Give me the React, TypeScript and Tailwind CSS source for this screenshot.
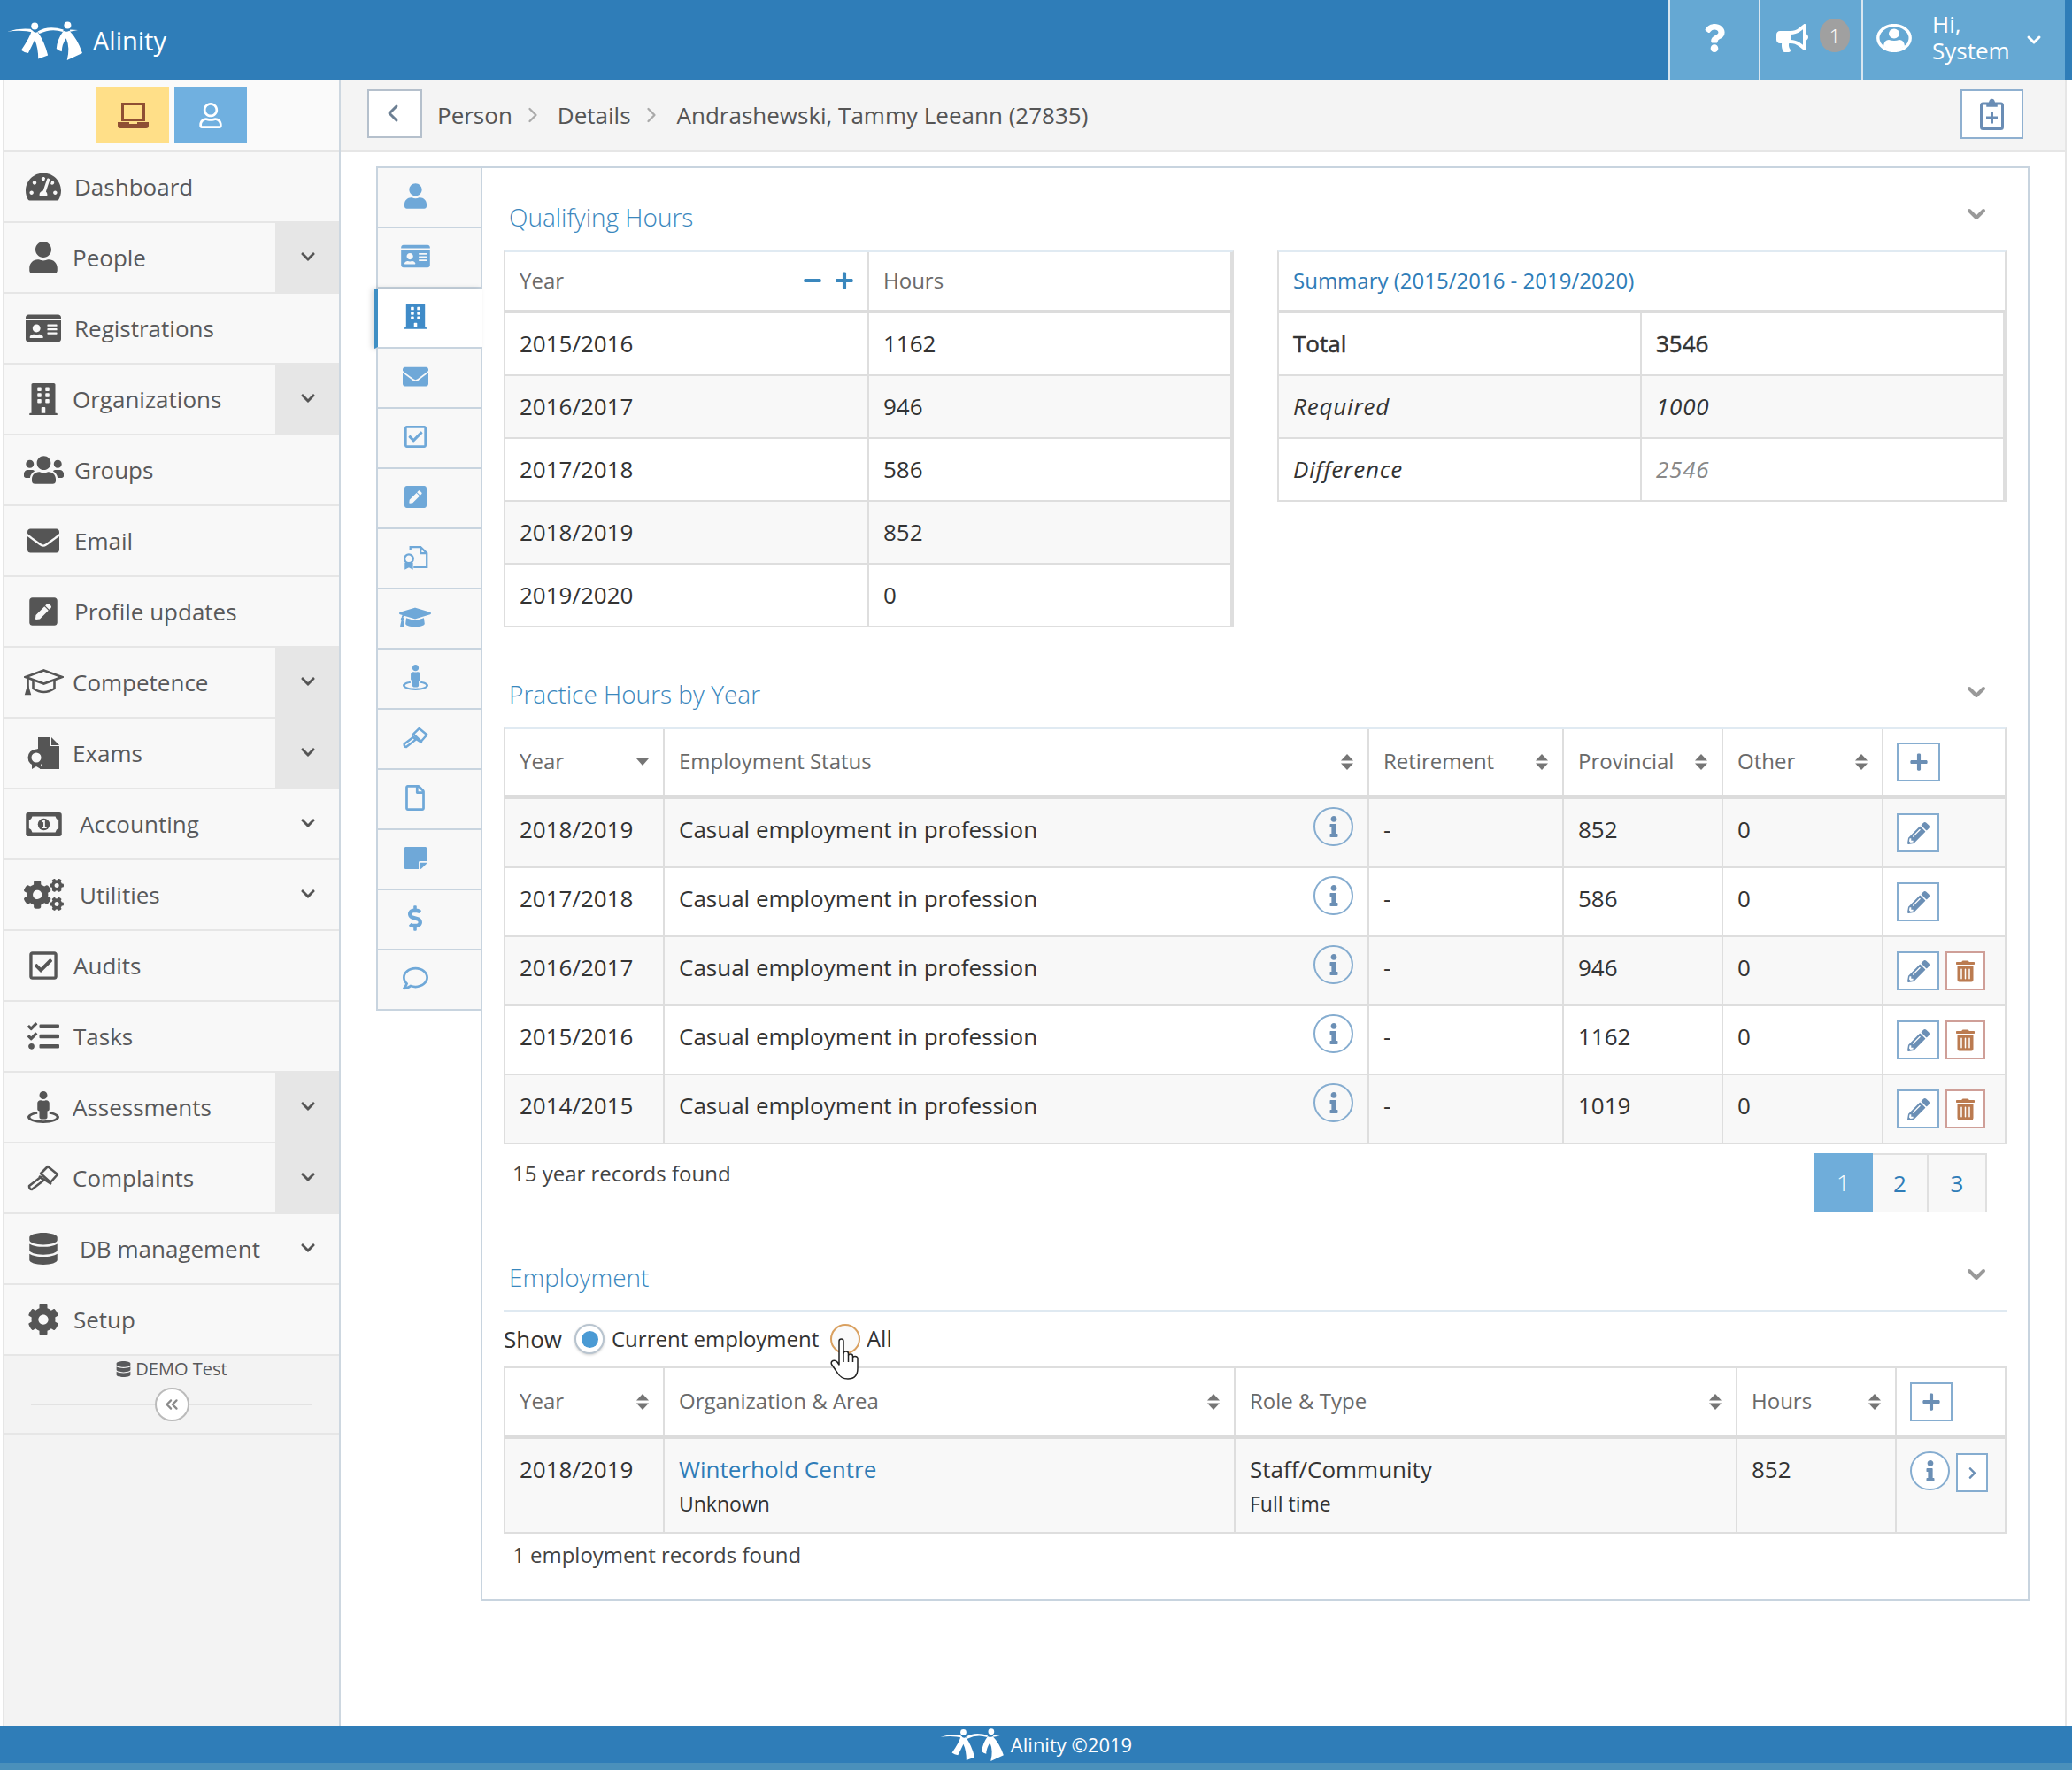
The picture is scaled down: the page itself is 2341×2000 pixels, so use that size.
import React from 'react';
import {
  FaBuilding, FaBullhorn, FaChevronDown, FaChevronRight, FaCog, FaCogs, FaDatabase, FaDollarSign, FaEnvelope,
  FaGraduationCap, FaIdCard, FaInfo, FaMinus, FaPenSquare, FaPencilAlt, FaPlus, FaQuestion,
  FaRegCheckSquare, FaRegComment, FaRegFile, FaRegUser, FaStickyNote, FaStreetView, FaTachometerAlt, FaTasks,
  FaTrashAlt, FaUser, FaUsers,
} from 'react-icons/fa';
import { ChevronDown, ChevronLeft, ChevronRight, ChevronsLeft } from 'lucide-react';

const Logo = ({ className }: { className: string }) => (
  <svg viewBox="0 0 256 132" className={className} fill="#fff">
    <circle cx="94" cy="16" r="12" />
    <circle cx="206" cy="13" r="12" />
    <path d="M1 35Q40 22 80 26L92 38Q50 28 1 35Z" />
    <path d="M104 34Q140 12 192 28L190 36Q150 22 110 42Z" />
    <path d="M214 28L241 30L214 35Z" />
    <path d="M84 30Q78 55 48 98Q58 106 72 108Q84 85 94 63Q106 90 106 128L139 116Q128 70 104 36Q94 42 84 30Z" />
    <path d="M192 32Q170 62 168 93Q175 100 186 103Q186 80 201 58Q215 90 204 132L256 108Q240 60 212 32Q202 38 192 32Z" />
  </svg>
);

const ExamFilled = () => (
  <svg viewBox="0 0 36 36" className="w-[36px] h-[36px]" fill="currentColor">
    <path d="M12 0H25V10H36V36H14L18 26Q18 16 10 13H12Z" />
    <path d="M27 0L36 9H27Z" />
    <circle cx="10" cy="23" r="7.5" fill="none" stroke="currentColor" strokeWidth="4" />
    <path d="M5 30V36L10 33L15 36V30Z" />
  </svg>
);

const ExamOutline = () => (
  <svg viewBox="0 0 34 30" className="w-[30px] h-[29px]" fill="none" stroke="currentColor" strokeWidth="2.6">
    <path d="M11 6V2H24L32 10V28H15" />
    <path d="M24 2V10H32" />
    <circle cx="9" cy="17" r="5.5" />
    <path d="M5 22V29L9 27L13 29V22" fill="currentColor" />
  </svg>
);

const GavelIcon = ({ className, width }: { className: string; width: number }) => (
  <svg viewBox="0 0 36 30" className={className} fill="none" stroke="currentColor" strokeWidth={width} strokeLinejoin="round">
    <path d="M2 24L15 14L18 18L5 28Q2 28 2 24Z" />
    <path d="M15 10L23 2L34 11L26 20Z" />
    <path d="M13 13L27 22" />
  </svg>
);

const CapOutline = () => (
  <svg viewBox="0 0 44 30" className="w-[45px] h-[30px]" fill="none" stroke="currentColor" strokeWidth="2.6">
    <path d="M22 1.5L42.5 9L22 16.5L1.5 9Z" />
    <path d="M10 13V22Q22 30 34 22V13" />
    <path d="M4 10V22" />
    <path d="M2 28L4 21L6 28Z" fill="currentColor" />
  </svg>
);

const MoneyIcon = () => (
  <svg viewBox="0 0 45 30" className="w-[45px] h-[27px]">
    <rect width="45" height="30" rx="3" fill="currentColor" />
    <path d="M8 5H37Q38 9 41 10V20Q38 21 37 25H8Q7 21 4 20V10Q7 9 8 5Z" fill="#f8f8f8" />
    <circle cx="22.5" cy="15" r="7.5" fill="currentColor" />
    <path d="M20 12L23 10.5V18.5M20 19H26" stroke="#f8f8f8" strokeWidth="2" fill="none" />
  </svg>
);

const LaptopIcon = () => (
  <svg viewBox="0 0 35 29" className="w-[35px] h-[29px]" fill="#8f4f33">
    <path fillRule="evenodd" d="M4 0H31V21H4ZM7 3V18H28V3Z" />
    <path d="M0 22H13V24H22V22H35V26Q35 29 32 29H3Q0 29 0 26Z" />
  </svg>
);

const ClipboardIcon = () => (
  <svg viewBox="0 0 27 36" className="w-[27px] h-[36px]" fill="none" stroke="#6a8db5" strokeWidth="3">
    <rect x="1.5" y="6" width="24" height="28.5" rx="2" />
    <path d="M8 6V9H19V6H16.5Q16 1.5 13.5 1.5Q11 1.5 10.5 6Z" fill="#6a8db5" strokeWidth="1.5" />
    <path d="M7 22H20M13.5 15.5V28.5" />
  </svg>
);

const UserRing = () => (
  <svg viewBox="0 0 40 32" className="w-[40px] h-[32px]">
    <ellipse cx="20" cy="16" rx="18.2" ry="14.4" fill="none" stroke="#fff" strokeWidth="3.4" />
    <ellipse cx="20" cy="11" rx="6" ry="5.4" fill="#fff" />
    <path d="M8 25Q9 18 14 18Q20 20 26 18Q31 18 32 25Q26 30 20 30Q14 30 8 25Z" fill="#fff" />
  </svg>
);

const HandCursor = () => (
  <svg viewBox="0 0 34 47" className="w-[34px] h-[47px]" fill="#fff" stroke="#222" strokeWidth="1.5" strokeLinejoin="round">
    <path d="M10 3.5Q10 1 12.5 1Q15 1 15 3.5V17Q15.5 15 18 15Q20.5 15 20.5 17.5V19.5Q21 18 23 18Q25.5 18 25.5 20.5V22Q26 20.5 28 20.5Q31 20.5 31 23.5V34Q31 46 20 46Q12 46 8 39L1.5 29.5Q0.5 26.5 3 25.5Q6 24.5 8 27L10 30Z" />
    <path d="M15 17V27M20.5 19.5V27M25.5 22V27" fill="none" />
  </svg>
);

const SortIcon = () => (
  <svg viewBox="0 0 14 18" className="w-[14px] h-[18px] mt-[2px] shrink-0" fill="#757575">
    <path d="M7 0L14 7.5H0Z" />
    <path d="M0 10.5H14L7 18Z" />
  </svg>
);

const SortDownIcon = () => (
  <svg viewBox="0 0 14 8" className="w-[14px] h-[8px] mt-[2px] shrink-0" fill="#757575">
    <path d="M0 0H14L7 8Z" />
  </svg>
);

const navItems = [
  { label: 'Dashboard', icon: <FaTachometerAlt className="w-[40px] h-[36px]" />, labelClass: 'ml-0' },
  { label: 'People', icon: <FaUser className="w-[32px] h-[36px]" />, labelClass: 'ml-[-2px]', chevron: 'gray' },
  { label: 'Registrations', icon: <FaIdCard className="w-[40px] h-[36px]" />, labelClass: 'ml-0' },
  { label: 'Organizations', icon: <FaBuilding className="w-[32px] h-[36px]" />, labelClass: 'ml-[-2px]', chevron: 'gray' },
  { label: 'Groups', icon: <FaUsers className="w-[45px] h-[36px]" />, labelClass: 'ml-0' },
  { label: 'Email', icon: <FaEnvelope className="w-[36px] h-[36px]" />, labelClass: 'ml-0' },
  { label: 'Profile updates', icon: <FaPenSquare className="w-[32px] h-[36px]" />, labelClass: 'ml-0' },
  { label: 'Competence', icon: <CapOutline />, labelClass: 'ml-[-2px]', chevron: 'gray' },
  { label: 'Exams', icon: <ExamFilled />, labelClass: 'ml-[-2px]', chevron: 'gray' },
  { label: 'Accounting', icon: <MoneyIcon />, labelClass: 'ml-[6px]', chevron: 'plain' },
  { label: 'Utilities', icon: <FaCogs className="w-[45px] h-[36px]" />, labelClass: 'ml-[6px]', chevron: 'plain' },
  { label: 'Audits', icon: <FaRegCheckSquare className="w-[32px] h-[36px]" />, labelClass: 'ml-[-1px]' },
  { label: 'Tasks', icon: <FaTasks className="w-[36px] h-[36px]" />, labelClass: 'ml-[-1px]' },
  { label: 'Assessments', icon: <FaStreetView className="w-[36px] h-[36px]" />, labelClass: 'ml-[-2px]', chevron: 'gray' },
  { label: 'Complaints', icon: <GavelIcon className="w-[36px] h-[36px]" width={2.6} />, labelClass: 'ml-[-2px]', chevron: 'gray' },
  { label: 'DB management', icon: <FaDatabase className="w-[32px] h-[36px]" />, labelClass: 'ml-[6px]', chevron: 'plain' },
  { label: 'Setup', icon: <FaCog className="w-[36px] h-[36px]" />, labelClass: 'ml-[-1px]' },
];

const tabs = [
  <FaUser className="w-[25px] h-[29px]" />,
  <FaIdCard className="w-[33px] h-[29px]" />,
  <FaBuilding className="w-[25px] h-[29px]" />,
  <FaEnvelope className="w-[29px] h-[29px]" />,
  <FaRegCheckSquare className="w-[25px] h-[29px]" />,
  <FaPenSquare className="w-[25px] h-[29px]" />,
  <ExamOutline />,
  <FaGraduationCap className="w-[36px] h-[29px]" />,
  <FaStreetView className="w-[29px] h-[29px]" />,
  <GavelIcon className="w-[29px] h-[29px]" width={3} />,
  <FaRegFile className="w-[22px] h-[29px]" />,
  <FaStickyNote className="w-[25px] h-[29px]" />,
  <FaDollarSign className="w-[16px] h-[29px]" />,
  <FaRegComment className="w-[29px] h-[29px]" />,
];

const qualifying = [
  ['2015/2016', '1162'],
  ['2016/2017', '946'],
  ['2017/2018', '586'],
  ['2018/2019', '852'],
  ['2019/2020', '0'],
];

const practice = [
  { year: '2018/2019', prov: '852', del: false },
  { year: '2017/2018', prov: '586', del: false },
  { year: '2016/2017', prov: '946', del: true },
  { year: '2015/2016', prov: '1162', del: true },
  { year: '2014/2015', prov: '1019', del: true },
];

const practiceCols = 'grid grid-cols-[180px_796px_220px_180px_181px_137px]';
const employCols = 'grid grid-cols-[180px_645px_567px_180px_122px]';
const cell = 'border-r-2 border-[#dedede] px-[16px] flex items-center';
const headCell = 'border-r-2 border-[#dedede] px-[16px] pb-[2px] flex items-center justify-between text-[24px] text-[#6a6a6a]';

const SectionTitle = ({ title, blockClass, chevronClass }: { title: string; blockClass: string; chevronClass: string }) => (
  <div className={`flex justify-between ${blockClass}`}>
    <div className="pl-[6px] text-[28px] leading-[38px] font-light text-[#3a87bd]">{title}</div>
    <ChevronDown className={`w-[32px] h-[32px] mr-[18px] text-[#999] ${chevronClass}`} strokeWidth={3} />
  </div>
);

const SquareBtn = ({ children, className }: { children: React.ReactNode; className: string }) => (
  <div className={`flex items-center justify-center border-2 bg-white ${className}`}>{children}</div>
);

const InfoBtn = ({ className }: { className: string }) => (
  <div className={`w-[45px] h-[44px] rounded-full border-2 border-[#86add0] flex items-center justify-center text-[#6b8fb5] shrink-0 ${className}`}>
    <FaInfo className="w-[24px] h-[24px]" />
  </div>
);

export default function App() {
  return (
    <div className="w-[2341px] h-[2000px] flex flex-col bg-white text-[26px] text-[#333] [font-family:'Open_Sans',sans-serif]">
      {/* Top bar */}
      <div className="h-[90px] shrink-0 flex justify-between bg-[#2f7db8] text-white">
        <div className="flex items-center pl-[8px]">
          <Logo className="w-[85px] h-[44px] mt-[2px]" />
          <span className="ml-[12px] pt-[2px] text-[29px]">Alinity</span>
        </div>
        <div className="flex mr-[8px] bg-[#65a8d3]">
          <div className="w-[102px] border-l-2 border-[#d8e6f0] flex items-center justify-center pb-[4px]">
            <FaQuestion className="w-[24px] h-[32px]" />
          </div>
          <div className="w-[116px] border-l-2 border-[#d8e6f0] flex items-center pl-[18px] pb-[4px]">
            <FaBullhorn className="w-[36px] h-[32px]" />
            <div className="ml-[13px] mb-[6px] w-[34px] h-[38px] rounded-full bg-[#a0a0a0] flex items-center justify-center text-[22px] font-light">1</div>
          </div>
          <div className="w-[230px] border-l-2 border-[#d8e6f0] flex items-center pl-[15px]">
            <div className="pb-[4px]"><UserRing /></div>
            <div className="ml-[23px] w-[96px] pb-[7px] leading-[30px] text-[26px]">
              <div>Hi,</div>
              <div>System</div>
            </div>
            <ChevronDown className="ml-[7px] w-[24px] h-[24px]" strokeWidth={3} />
          </div>
        </div>
      </div>

      <div className="flex-1 flex min-h-0">
        {/* Sidebar */}
        <div className="ml-[3px] w-[382px] shrink-0 border-x-2 border-l-[#e6e6e6] border-r-[#cdd7e0] bg-[#f3f3f3] flex flex-col">
          <div className="h-[82px] bg-[#fafafa] border-b-2 border-[#e6e6e6] flex pl-[104px] pt-[8px] gap-[6px]">
            <div className="w-[82px] h-[64px] bg-[#ffdf88] flex items-center justify-center"><LaptopIcon /></div>
            <div className="w-[82px] h-[64px] bg-[#70b0e0] flex items-center justify-center text-white"><FaRegUser className="w-[26px] h-[29px]" /></div>
          </div>
          {navItems.map((item) => (
            <div key={item.label} className="h-[80px] flex bg-[#f8f8f8] border-b-2 border-[#e6e6e6]">
              <div className="flex-1 flex items-center text-[#58595b]">
                <div className="ml-[9px] w-[70px] flex justify-center text-[#555]">{item.icon}</div>
                <span className={`text-[26px] ${item.labelClass}`}>{item.label}</span>
              </div>
              {item.chevron && (
                <div className={`w-[72px] flex items-center justify-center pl-[1px] pb-[4px] text-[#555] -mb-[2px] ${item.chevron === 'gray' ? 'bg-[#e6e6e6]' : ''}`}>
                  <FaChevronDown className="w-[18px] h-[18px]" />
                </div>
              )}
            </div>
          ))}
          <div className="h-[89px] border-b-2 border-[#e6e6e6] flex flex-col items-center">
            <div className="h-[30px] flex items-center gap-[5px] text-[20px] text-[#58595b]">
              <FaDatabase className="w-[17px] h-[18px]" />
              DEMO Test
            </div>
            <div className="mt-[6px] w-[318px] flex items-center">
              <div className="flex-1 h-[2px] bg-[#e2e2e2]" />
              <div className="w-[39px] h-[38px] rounded-full border-2 border-[#bbb] bg-white flex items-center justify-center text-[#8a8a8a]">
                <ChevronsLeft className="w-[22px] h-[22px]" strokeWidth={2.5} />
              </div>
              <div className="flex-1 h-[2px] bg-[#e2e2e2]" />
            </div>
          </div>
        </div>

        {/* Main */}
        <div className="w-[1950px] shrink-0 border-r-2 border-[#e6e6e6] flex flex-col">
          <div className="h-[82px] shrink-0 bg-[#f4f4f4] border-b-2 border-[#e6e6e6] flex items-center text-[#555] pr-[47px]">
            <div className="ml-[30px] w-[62px] h-[55px] mb-[4px] border-2 border-[#b5c0cc] bg-white flex items-center justify-center text-[#6c7f93] pr-[5px]">
              <ChevronLeft className="w-[32px] h-[32px]" strokeWidth={2.2} />
            </div>
            <span className="ml-[17px]">Person</span>
            <ChevronRight className="ml-[9px] mr-[14px] w-[28px] h-[28px] text-[#aaa]" strokeWidth={2} />
            <span>Details</span>
            <ChevronRight className="ml-[9px] mr-[15px] w-[28px] h-[28px] text-[#aaa]" strokeWidth={2} />
            <span>Andrashewski, Tammy Leeann (27835)</span>
            <SquareBtn className="ml-auto w-[71px] h-[56px] mb-[2px] border-[#8fb0d0]"><ClipboardIcon /></SquareBtn>
          </div>

          <div className="flex items-start pl-[40px] pt-[16px]">
            {/* Record tabs */}
            <div className="w-[120px] relative z-10 shrink-0 border-t-2 border-[#c8d4df] text-[#6fa8d8]">
              {tabs.map((icon, i) => (
                <div
                  key={i}
                  className={
                    i === 2
                      ? 'h-[68px] -ml-[2px] bg-white border-l-4 border-l-[#3f8fc4] border-b-2 border-b-[#c8d4df] flex items-center pb-[3px] text-[#3f8bc8] shadow-[-3px_0_6px_rgba(0,0,0,0.15)]'
                      : 'h-[68px] bg-[#f8f8f8] border-x-2 border-[#c8d4df] border-b-2 flex items-center pb-[3px]'
                  }
                >
                  <div className="w-[84px] flex justify-center">{icon}</div>
                </div>
              ))}
            </div>

            {/* Panel */}
            <div className="-ml-[2px] w-[1750px] h-[1621px] border-2 border-[#c8d4df] px-[24px]">
              <SectionTitle title="Qualifying Hours" blockClass="h-[93px] pt-[36px]" chevronClass="mt-[0px]" />
              <div className="flex justify-between">
                <div className="w-[825px] border-2 border-[#dedede] border-t-[#e0eaf2]">
                  <div className="grid grid-cols-[411px_410px] h-[69px] border-b-4 border-[#dcdcdc]">
                    <div className={headCell}>
                      Year
                      <span className="flex items-center gap-[14px] text-[#3a87bd] mr-[-1px]">
                        <FaMinus className="w-[22px] h-[22px]" />
                        <FaPlus className="w-[22px] h-[22px]" />
                      </span>
                    </div>
                    <div className={`${headCell} border-r-0`}>Hours</div>
                  </div>
                  {qualifying.map((r, i) => (
                    <div key={r[0]} className={`grid grid-cols-[411px_410px] h-[71px] border-b-2 border-[#dedede] last:border-b-0 last:h-[69px] ${i % 2 ? 'bg-[#f8f8f8]' : 'bg-white'}`}>
                      <div className={cell}>{r[0]}</div>
                      <div className={`${cell} border-r-0`}>{r[1]}</div>
                    </div>
                  ))}
                </div>
                <div className="w-[824px] self-start border-2 border-[#dedede] border-t-[#e0eaf2]">
                  <div className="h-[69px] border-b-4 border-[#dcdcdc] px-[16px] pb-[2px] flex items-center text-[24px] text-[#2f7db8]">Summary (2015/2016 - 2019/2020)</div>
                  <div className="grid grid-cols-[410px_410px] h-[71px] border-b-2 border-[#dedede] [-webkit-text-stroke:0.5px_#333]">
                    <div className={cell}>Total</div>
                    <div className={`${cell} border-r-0`}>3546</div>
                  </div>
                  <div className="grid grid-cols-[410px_410px] h-[71px] border-b-2 border-[#dedede] italic tracking-[0.8px] bg-[#f8f8f8]">
                    <div className={cell}>Required</div>
                    <div className={`${cell} border-r-0`}>1000</div>
                  </div>
                  <div className="grid grid-cols-[410px_410px] h-[69px] italic tracking-[0.8px]">
                    <div className={cell}>Difference</div>
                    <div className={`${cell} border-r-0 text-[#888]`}>2546</div>
                  </div>
                </div>
              </div>

              <SectionTitle title="Practice Hours by Year" blockClass="h-[113px] pt-[56px]" chevronClass="mt-[1px]" />
              <div className="border-x-2 border-t-2 border-[#dedede] border-t-[#e0eaf2]">
                <div className={`${practiceCols} h-[79px] border-b-[5px] border-[#dcdcdc]`}>
                  <div className={headCell}>Year<SortDownIcon /></div>
                  <div className={headCell}>Employment Status<SortIcon /></div>
                  <div className={headCell}>Retirement<SortIcon /></div>
                  <div className={headCell}>Provincial<SortIcon /></div>
                  <div className={headCell}>Other<SortIcon /></div>
                  <div className="pl-[15px] flex items-center">
                    <SquareBtn className="w-[49px] h-[44px] border-[#86add0] text-[#6b8fb5]"><FaPlus className="w-[22px] h-[22px]" /></SquareBtn>
                  </div>
                </div>
                {practice.map((r, i) => (
                  <div key={r.year} className={`${practiceCols} h-[78px] border-b-2 border-[#dedede] ${i % 2 ? 'bg-white' : 'bg-[#f8f8f8]'}`}>
                    <div className={`${cell} pb-[7px]`}>{r.year}</div>
                    <div className={`${cell} pb-[7px] justify-between pr-[16px]`}>
                      Casual employment in profession
                      <InfoBtn className="mb-[7px]" />
                    </div>
                    <div className={`${cell} pb-[7px]`}>-</div>
                    <div className={`${cell} pb-[7px]`}>{r.prov}</div>
                    <div className={`${cell} pb-[7px]`}>0</div>
                    <div className="pl-[15px] flex items-center gap-[7px]">
                      <SquareBtn className="w-[48px] h-[44px] border-[#86add0] text-[#6b8fb5]"><FaPencilAlt className="w-[25px] h-[25px]" /></SquareBtn>
                      {r.del && (
                        <SquareBtn className="w-[45px] h-[44px] border-[#cf9f98] text-[#bb7b50]"><FaTrashAlt className="w-[21px] h-[25px]" /></SquareBtn>
                      )}
                    </div>
                  </div>
                ))}
              </div>

              <div className="flex justify-between items-start mt-[10px] pr-[22px]">
                <div className="pl-[10px] pt-[9px] text-[24px] leading-[28px] text-[#444]">15 year records found</div>
                <div className="flex h-[66px] border-t-2 border-[#e0e0e0] text-[#2f7db8]">
                  <div className="w-[67px] -mt-[2px] bg-[#6fadda] text-white flex items-center justify-center font-light">1</div>
                  <div className="w-[63px] bg-[#f8f8f8] border-r-2 border-[#e0e0e0] flex items-center justify-center">2</div>
                  <div className="w-[66px] bg-[#f8f8f8] border-r-2 border-[#e0e0e0] flex items-center justify-center">3</div>
                </div>
              </div>

              <SectionTitle title="Employment" blockClass="h-[113px] pt-[55px] border-b-2 border-[#dfe9f1]" chevronClass="mt-[0px]" />
              <div className="h-[62px] flex items-center">
                <span>Show</span>
                <div className="ml-[14px] w-[34px] h-[34px] rounded-full border-2 border-[#b8c4cf] bg-white flex items-center justify-center shadow-[0_1px_3px_rgba(0,0,0,0.2)]">
                  <div className="w-[19px] h-[19px] rounded-full bg-[#4a9ad4]" />
                </div>
                <span className="ml-[8px] text-[24px]">Current employment</span>
                <div className="relative ml-[13px] w-[34px] h-[34px] rounded-full border-2 border-[#d9a060] bg-[#fafafa]">
                  <div className="absolute left-[-2px] top-[14px] z-20"><HandCursor /></div>
                </div>
                <span className="ml-[7px] text-[25px]">All</span>
              </div>
              <div className="border-x-2 border-t-2 border-[#dedede]">
                <div className={`${employCols} h-[80px] border-b-[5px] border-[#dcdcdc]`}>
                  <div className={headCell}>Year<SortIcon /></div>
                  <div className={headCell}>Organization & Area<SortIcon /></div>
                  <div className={headCell}>Role & Type<SortIcon /></div>
                  <div className={headCell}>Hours<SortIcon /></div>
                  <div className="pl-[15px] flex items-center">
                    <SquareBtn className="w-[48px] h-[44px] border-[#86add0] text-[#6b8fb5]"><FaPlus className="w-[22px] h-[22px]" /></SquareBtn>
                  </div>
                </div>
                <div className={`${employCols} h-[107px] border-b-2 border-[#dedede] bg-[#f8f8f8]`}>
                  <div className="border-r-2 border-[#dedede] px-[16px] pt-[16px] leading-[36px]">2018/2019</div>
                  <div className="border-r-2 border-[#dedede] px-[16px] pt-[16px] leading-[36px]">
                    <div className="text-[#2f7db8]">Winterhold Centre</div>
                    <div className="mt-[3px] text-[23px]">Unknown</div>
                  </div>
                  <div className="border-r-2 border-[#dedede] px-[16px] pt-[16px] leading-[36px]">
                    <div>Staff/Community</div>
                    <div className="mt-[3px] text-[23px]">Full time</div>
                  </div>
                  <div className="border-r-2 border-[#dedede] px-[16px] pt-[16px] leading-[36px]">852</div>
                  <div className="pl-[15px] pt-[14px] flex items-start gap-[7px]">
                    <InfoBtn className="bg-white" />
                    <SquareBtn className="w-[36px] h-[44px] mt-[2px] border-[#86add0] text-[#6b8fb5]"><FaChevronRight className="w-[15px] h-[15px]" /></SquareBtn>
                  </div>
                </div>
              </div>
              <div className="mt-[10px] pl-[10px] text-[24px] leading-[28px] text-[#444]">1 employment records found</div>
            </div>
          </div>
        </div>
      </div>

      {/* Footer */}
      <div className="h-[50px] shrink-0 bg-[#4a90bb]">
        <div className="h-[42px] bg-[#2f7db8] flex items-center justify-center gap-[8px] text-white text-[22px]">
          <Logo className="w-[72px] h-[37px]" />
          <span>Alinity ©2019</span>
        </div>
      </div>
    </div>
  );
}
